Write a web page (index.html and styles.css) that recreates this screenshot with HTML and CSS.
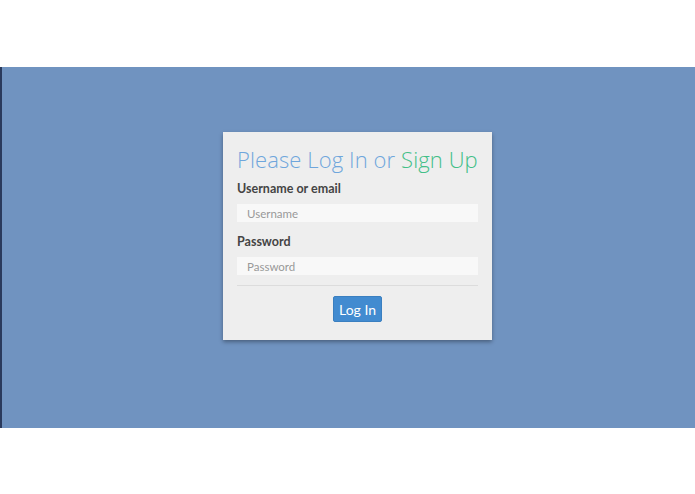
FILE: index.html
```html
<!DOCTYPE html>
<html>
<head>
<meta charset="utf-8">
<link rel="stylesheet" href="styles.css">
</head>
<body>
<div class="top"></div>
<div class="band">
  <div class="card">
    <h1 class="title">Please Log In or <span class="green">Sign Up</span></h1>
    <label class="label">Username or email</label>
    <input class="field" type="text" placeholder="Username">
    <label class="label second">Password</label>
    <input class="field" type="password" placeholder="Password">
    <div class="rule"></div>
    <div class="actions"><button class="btn">Log In</button></div>
  </div>
</div>
</body>
</html>
```
FILE: styles.css
```css
html, body { margin: 0; padding: 0; background: #fff; }
body { font-family: Lato, "Open Sans", sans-serif; }
.top { height: 67px; }
.band {
  height: 361px;
  box-sizing: border-box;
  background: #7093c0;
  border-left: 2px solid #2a3a5c;
  padding: 65px 0 0 221px;
}
.card {
  width: 269px;
  height: 208px;
  box-sizing: border-box;
  background: #eeeeee;
  box-shadow: 0 2px 4px rgba(0,0,0,0.35);
  padding: 12px 14px 0 14px;
}
.title {
  margin: 0;
  font-family: "Open Sans", Lato, sans-serif;
  font-weight: 300;
  font-size: 22px;
  line-height: 30px;
  color: #6fa6dc;
  white-space: nowrap;
  letter-spacing: 0.1px;
}
.green { color: #43bf88; }
.label {
  display: block;
  margin-top: 7px;
  font-weight: bold;
  font-size: 12.5px;
  line-height: 16px;
  color: #444;
}
.label.second { margin-top: 12px; }
.field {
  display: block;
  width: 241px;
  height: 18px;
  box-sizing: border-box;
  margin-top: 7px;
  border: none;
  background: #f8f8f8;
  padding: 0 10px;
  font-family: Lato, sans-serif;
  font-size: 11.5px;
  color: #555;
  outline: none;
}
.field::placeholder { color: #999; }
.rule { height: 1px; background: #dcdcdc; margin-top: 10px; width: 241px; }
.actions { display: flex; justify-content: center; margin-top: 10px; }
.btn {
  width: 49px;
  height: 26px;
  border: 1px solid #3a7fc0;
  border-radius: 2px;
  background: #428bd0;
  color: #fff;
  font-family: Lato, sans-serif;
  font-size: 14px;
  padding: 0;
}
```
